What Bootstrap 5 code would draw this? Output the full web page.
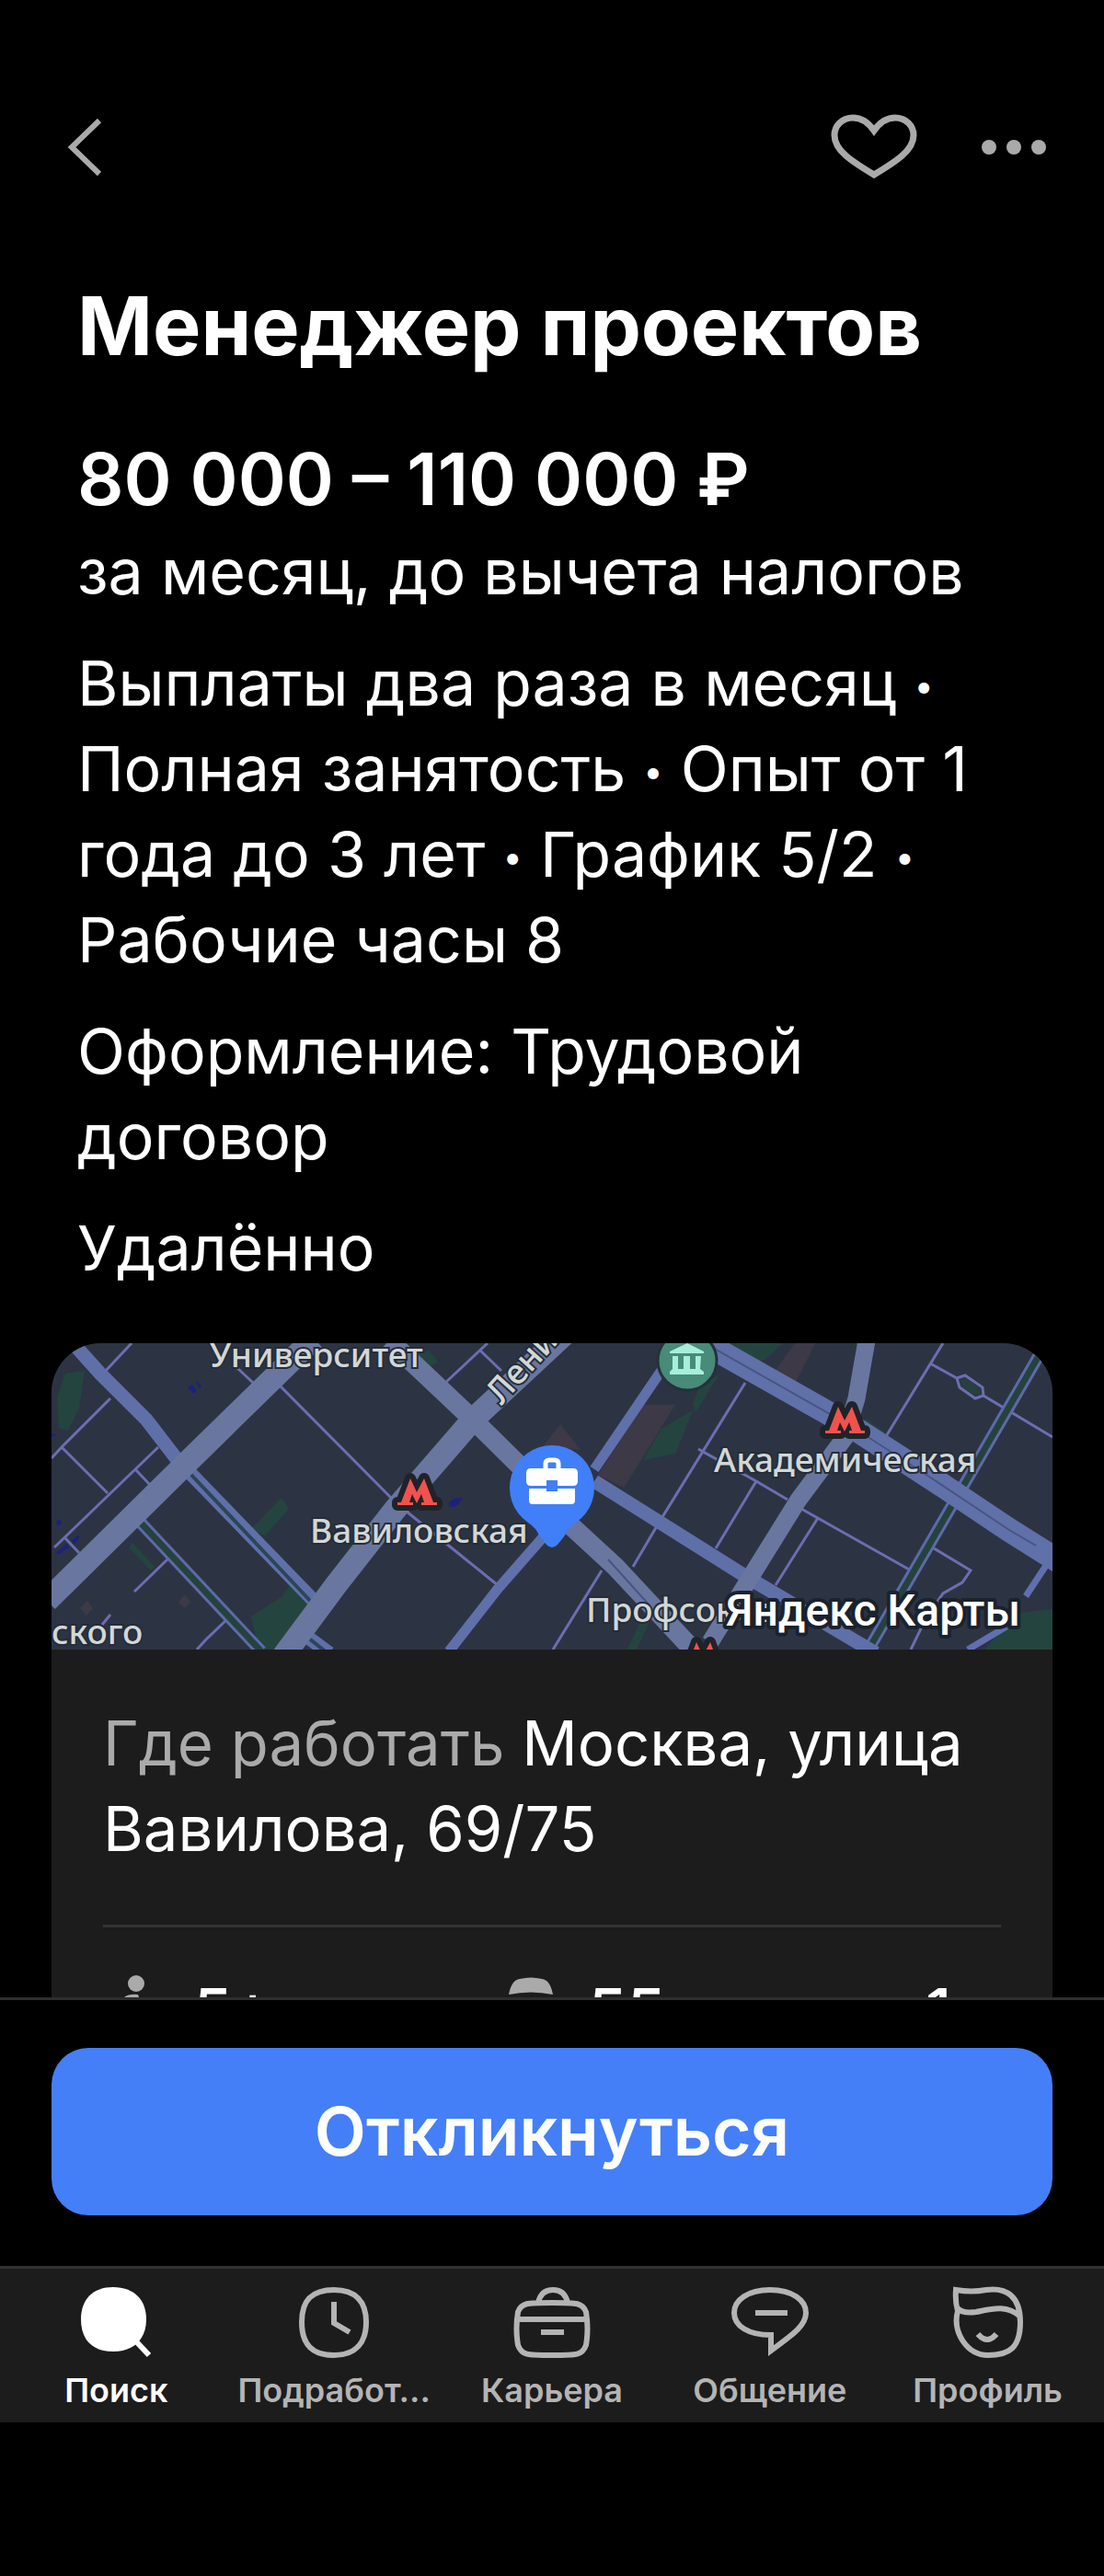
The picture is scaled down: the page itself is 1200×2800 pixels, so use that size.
<!DOCTYPE html>
<html lang="ru">
<head>
<meta charset="utf-8">
<meta name="viewport" content="width=device-width, initial-scale=1">
<title>Менеджер проектов</title>
<link href="https://cdn.jsdelivr.net/npm/bootstrap@5.3.0/dist/css/bootstrap.min.css" rel="stylesheet">
<style>
  body { background: #000; color: #fff; font-family: Inter, "Noto Sans", sans-serif; }
  .screen { height: 100vh; overflow: hidden; }
  .topbar { padding: 112px 60px 0 56px; }
  .icon-btn { background: none; border: 0; padding: 0; color: #aaa; height: 96px; display: flex; align-items: center; }
  .topbar-actions { gap: 64px; }
  .vacancy { min-height: 0; overflow: hidden; padding: 96px 56px 0; }
  .vacancy-info { padding: 0 28px; margin-bottom: 57px; }
  .vacancy-title { font-size: 88px; line-height: 100px; font-weight: 700; margin: 0 0 70px; }
  .salary { font-size: 79px; line-height: 92px; font-weight: 600; margin: 0 0 9px; }
  .info-text { font-size: 68px; line-height: 93px; margin: 0 0 28px; }
  .info-text.address { font-size: 67px; }
  .dot-sep { font-size: 38px; line-height: 1; vertical-align: 8px; }
  .place-card { background: #1c1c1c; border: 0; border-radius: 54px; overflow: hidden; color: #fff; }
  .city-map { display: block; width: 100%; height: auto; }
  .city-map text { font-family: "Noto Sans", sans-serif; }
  .city-map .map-brand { font-family: Roboto, sans-serif; }
  .place-body { padding: 55px 56px 0; }
  .place-body hr { margin: 58px 0 44px; border-top: 3px solid #333; opacity: 1; }
  .routes { gap: 34px; padding-left: 6px; }
  .route { gap: 32px; font-size: 68px; line-height: 93px; font-weight: 500; white-space: nowrap; }
  .muted-text { color: #aaa; }
  .action-panel { border-top: 3px solid #2e2e2e; padding: 52px 56px 55px; background: #000; }
  .btn-apply { --bs-btn-bg: #447ff8; --bs-btn-color: #fff; --bs-btn-hover-bg: #3a72e6; --bs-btn-hover-color: #fff;
    font-size: 73px; line-height: 98px; font-weight: 600; padding: 42px 40px; border: 0; border-radius: 40px; }
  .tabbar { background: #1c1c1c; border-top: 3px solid #333; padding: 18px 8px 13px; margin-bottom: 167px; }
  .tab-link { flex: 1 1 0; min-width: 0; color: #b4b4b4; text-decoration: none; font-size: 36px; line-height: 44px; font-weight: 600; gap: 12px; }
  .tab-link.active { color: #fff; }
</style>
</head>
<body>
<div class="screen d-flex flex-column">
  <header class="topbar d-flex justify-content-between align-items-center flex-shrink-0">
    <button class="icon-btn" type="button" aria-label="Назад">
      <svg width="72" height="72" viewBox="0 0 72 72" fill="none" stroke="currentColor" stroke-width="6"><path d="M52 7 22 36l30 29"/></svg>
    </button>
    <div class="topbar-actions d-flex">
      <button class="icon-btn" type="button" aria-label="В избранное">
        <svg width="100" height="80" viewBox="0 0 100 80" fill="none" stroke="currentColor" stroke-width="7"><path d="M50 22C43 12 35 8 27 8 15 8 7 17 7 27c0 17 20 29 43 43 23-14 43-26 43-43C93 17 85 8 73 8 65 8 57 12 50 22Z"/></svg>
      </button>
      <button class="icon-btn" type="button" aria-label="Ещё">
        <svg width="76" height="20" viewBox="0 0 76 20" fill="currentColor"><circle cx="11" cy="10" r="8"/><circle cx="38" cy="10" r="8"/><circle cx="65" cy="10" r="8"/></svg>
      </button>
    </div>
  </header>

  <main class="vacancy flex-grow-1">
    <section class="vacancy-info">
      <h1 class="vacancy-title">Менеджер проектов</h1>
      <p class="salary">80 000 – 110 000 ₽</p>
      <p class="info-text">за месяц, до вычета налогов</p>
      <p class="info-text">Выплаты два раза в месяц <span class="dot-sep">•</span> Полная занятость <span class="dot-sep">•</span> Опыт от 1 года до 3 лет <span class="dot-sep">•</span> График 5/2 <span class="dot-sep">•</span> Рабочие часы 8</p>
      <p class="info-text">Оформление: Трудовой договор</p>
      <p class="info-text">Удалённо</p>
    </section>

    <section class="card place-card">
      <svg class="city-map" viewBox="0 0 1088 333" role="img" aria-label="Карта">
        <rect width="1088" height="333" fill="#2c3444"/>
        <g fill="#24453f">
          <path d="M15 33 36 30 30 70 18 95 8 92 6 60Z"/>
          <path d="M216 203 250 168 258 180 232 209Z"/>
          <path d="M217 297 250 276 260 262 282 282 250 333 225 333Z"/>
          <path d="M88 217 112 243 108 247 84 222Z"/>
          <path d="M643 127 663 93 697 73 678 120Z"/>
          <path d="M697 67 705 45 725 35 700 75Z"/>
          <path d="M728 0H795L775 18 760 22Z"/>
          <path d="M885 82 908 98 900 104 880 90Z"/>
          <path d="M626 333 640 303 650 303 636 333Z"/>
          <path d="M1015 333 1045 294 1088 289V333Z"/>
          <path d="M410 8 420 20 410 27 398 12Z"/>
        </g>
        <g fill="#3d3947">
          <path d="M594 143 643 67 678 67 622 157Z"/>
          <path d="M785 32 808 0H830L808 44 790 48Z"/>
          <path d="M535 111 553 88 575 116Z"/>
          <path d="M31 288 39 280 45 288 38 296ZM138 282 145 273 151 281 145 288Z"/>
        </g>
        <g fill="#1c227c">
          <path d="M148 48l5-3 5 7-4 3zM157 42l2-1 4 7-2 1zM432 174q3-6 14-6-1 8-10 10-5 0-4-4zM5 193l5-1 1 5-5 1zM5 228l11-10 3 4-12 8zM22 215l7-7 1 4-6 7zM0 98l6 2-6 2z"/>
        </g>
        <g fill="none" stroke="#6b6eb0" stroke-width="3">
          <path d="M87 0 57 32M64 60 11 113 0 125M11 113 61 163M116 113 3 222M91 137 107 154M15 212 30 228M126 235 90 270M191 300 168 322 158 333M202 27 219 43M244 42 371 170M386 183 485 263M428 43 474 0M466 8 489 30M64 295 55 306"/>
          <path d="M545 333 598 247M632 243 659 197 754 43M703 115 766 150 800 170M815 180 934 247M766 150 722 223M833 190 787 263"/>
          <path d="M969 0 906 103M955 22 984 38M984 38 993 35 1012 48 1013 57 1004 60 987 48ZM1013 57 1088 102M959 223 999 247 990 260 969 272 950 300 934 333"/>
        </g>
        <path d="M988 40 993 38 1009 49 1010 55 1004 57 990 47Z" fill="#26423f"/>
        <g fill="none">
          <path d="M94 192 228 335M1074 12 990 157 888 333" stroke="#5b6ba8" stroke-width="13"/>
          <path d="M94 192 228 335M1074 12 990 157 888 333" stroke="#26423f" stroke-width="7"/>
          <path d="M432 335 485 267 535 210M590 137 664 28" stroke="#5f70aa" stroke-width="11"/>
          <path d="M590 150 754 253 896 337M26 3 53 33 103 83 137 127 290 285M275 317 302 337" stroke="#5f6fa8" stroke-width="15"/>
          <path d="M149 140 284 283M275 317 300 337" stroke="#2d4558" stroke-width="4"/>
          <path d="M1084 237 1059 275M996 333 1038 308" stroke="#606fb0" stroke-width="7"/>
          <path d="M367-3 458 83 543 167 563 197 613 243 697 333" stroke="#69769f" stroke-width="21"/>
          <path d="M-5 280 145 132 285-5" stroke="#69769f" stroke-width="25"/>
          <path d="M252 340 309 263 374 180 458 83 560-12" stroke="#69769f" stroke-width="25"/>
          <path d="M886-3 875 60 862 103 812 170 758 257 716 325" stroke="#69769f" stroke-width="19"/>
          <path d="M710 0 869 90 957 147 1041 203 1095 237" stroke="#6070a8" stroke-width="26"/>
          <path d="M710 0 869 90 957 147 1041 203 1070 220M605 235 650 285" stroke="#485582" stroke-width="2"/>
        </g>
        <g fill="#d2d7d7" stroke="#252d38" stroke-width="4" paint-order="stroke" font-size="37" font-weight="500">
          <text x="172" y="26">Университет</text>
          <text x="281" y="217">Вавиловская</text>
          <text x="720" y="140">Академическая</text>
          <text x="581" y="303">Профсоюзная</text>
          <text x="0" y="327">ского</text>
          <text transform="translate(489 68) rotate(-48)">Ленинский</text>
        </g>
        <defs>
          <path id="metro" d="M0 29V26H4L14 0 21 15 29 0 39 26H43V29H26V26H29L26 17 21 27 16 17 13 26H17V29Z"/>
        </defs>
        <g fill="#f0524d" stroke="#202329" stroke-width="12" stroke-linejoin="round" paint-order="stroke">
          <use href="#metro" x="376" y="147"/><use href="#metro" x="841" y="69"/><use href="#metro" x="687" y="325"/>
        </g>
        <circle cx="691" cy="19" r="32" fill="#488b78" stroke="#25313c" stroke-width="3"/>
        <path d="M672 9 691 0 709 9V11H672ZM675 14H681V28H687V14H694V28H700V14H706L705 28 709 31V34H672V31L675 28Z" fill="#a7efd9"/>
        <path d="M544 111a46 46 0 0 1 26 84q-9 6-12 14l-8 10q-6 6-12 0l-8-10q-3-8-12-14a46 46 0 0 1 26-84Z" fill="#407ff8"/>
        <path d="M537 138V131Q537 127 541 127H547Q551 127 551 131V138" fill="none" stroke="#fff" stroke-width="5"/>
        <path d="M521 136H567Q572 136 572 141V150Q572 155 567 155H550V149H538V155H521Q516 155 516 150V141Q516 136 521 136ZM519 158H538V161H550V158H569V171Q569 175 565 175H523Q519 175 519 171Z" fill="#fff"/>
        <text class="map-brand" x="733" y="307" font-size="48" font-weight="500" fill="#fff" stroke="#1b222d" stroke-width="8" stroke-linejoin="round" paint-order="stroke">Яндекс Карты</text>
      </svg>
      <div class="place-body">
        <p class="info-text address mb-0"><span class="muted-text">Где работать</span> Москва, улица Вавилова, 69/75</p>
        <hr>
        <div class="routes d-flex">
          <div class="route d-flex">
            <svg class="muted-text" width="60" height="93" viewBox="0 0 60 93" fill="currentColor"><circle cx="30" cy="17" r="9"/><path d="M17 32Q22 28 32 29L40 52 34 80 26 80Z"/></svg>
            <span>5+ часов</span>
          </div>
          <div class="route d-flex">
            <svg class="muted-text" width="60" height="93" viewBox="0 0 60 93" fill="currentColor"><path d="M6 29Q9 13 18 12Q30 9 42 12Q51 13 54 29Q30 24 6 29ZM6 35H54V77H6Z"/></svg>
            <span>55 минут · 1</span>
          </div>
        </div>
      </div>
    </section>
  </main>

  <div class="action-panel flex-shrink-0">
    <button class="btn btn-apply w-100" type="button">Откликнуться</button>
  </div>

  <nav class="tabbar d-flex flex-shrink-0" aria-label="Разделы">
    <a class="tab-link active d-flex flex-column align-items-center" href="#" aria-current="page">
      <svg width="80" height="80" viewBox="0 0 80 80" fill="currentColor"><path d="M37 2C60 2 73 16 73 37S60 72 37 72 2 59 2 37 15 2 37 2Z"/><path d="M61 60 76 76" stroke="currentColor" stroke-width="6"/></svg>
      <span>Поиск</span>
    </a>
    <a class="tab-link d-flex flex-column align-items-center" href="#">
      <svg width="80" height="80" viewBox="0 0 80 80" fill="none" stroke="currentColor" stroke-width="6"><path d="M40 5C64 5 75 18 75 40S64 76 40 76 5 64 5 40 16 5 40 5Z"/><path d="M40 18V41L57 51"/></svg>
      <span>Подработ…</span>
    </a>
    <a class="tab-link d-flex flex-column align-items-center" href="#">
      <svg width="88" height="80" viewBox="0 0 88 80" fill="none" stroke="currentColor" stroke-width="6"><path d="M44 19C72 19 77 19 81 29Q84 47 81 65C77 76 72 76 44 76S11 76 7 65Q4 47 7 29C11 19 16 19 44 19ZM29 19Q32 5 45 5T61 19M6 37H82M32 51H57"/></svg>
      <span>Карьера</span>
    </a>
    <a class="tab-link d-flex flex-column align-items-center" href="#">
      <svg width="88" height="80" viewBox="0 0 88 80" fill="none" stroke="currentColor" stroke-width="6"><path d="M44 5C68 5 83 16 83 30 83 44 68 54 45 71V54C20 54 5 44 5 30S20 5 44 5ZM28 30H63"/></svg>
      <span>Общение</span>
    </a>
    <a class="tab-link d-flex flex-column align-items-center" href="#">
      <svg width="80" height="80" viewBox="0 0 80 80" fill="none" stroke="currentColor" stroke-width="6"><path d="M5 5Q22 8 38 5C60 2 75 12 75 40S63 76 40 76 1 51 7 28Q4 18 5 5ZM7 25Q12 31 27 29C42 26 60 20 75 34M29 53Q39 65 49 53"/></svg>
      <span>Профиль</span>
    </a>
  </nav>
</div>
<script src="https://cdn.jsdelivr.net/npm/bootstrap@5.3.0/dist/js/bootstrap.bundle.min.js"></script>
</body>
</html>
